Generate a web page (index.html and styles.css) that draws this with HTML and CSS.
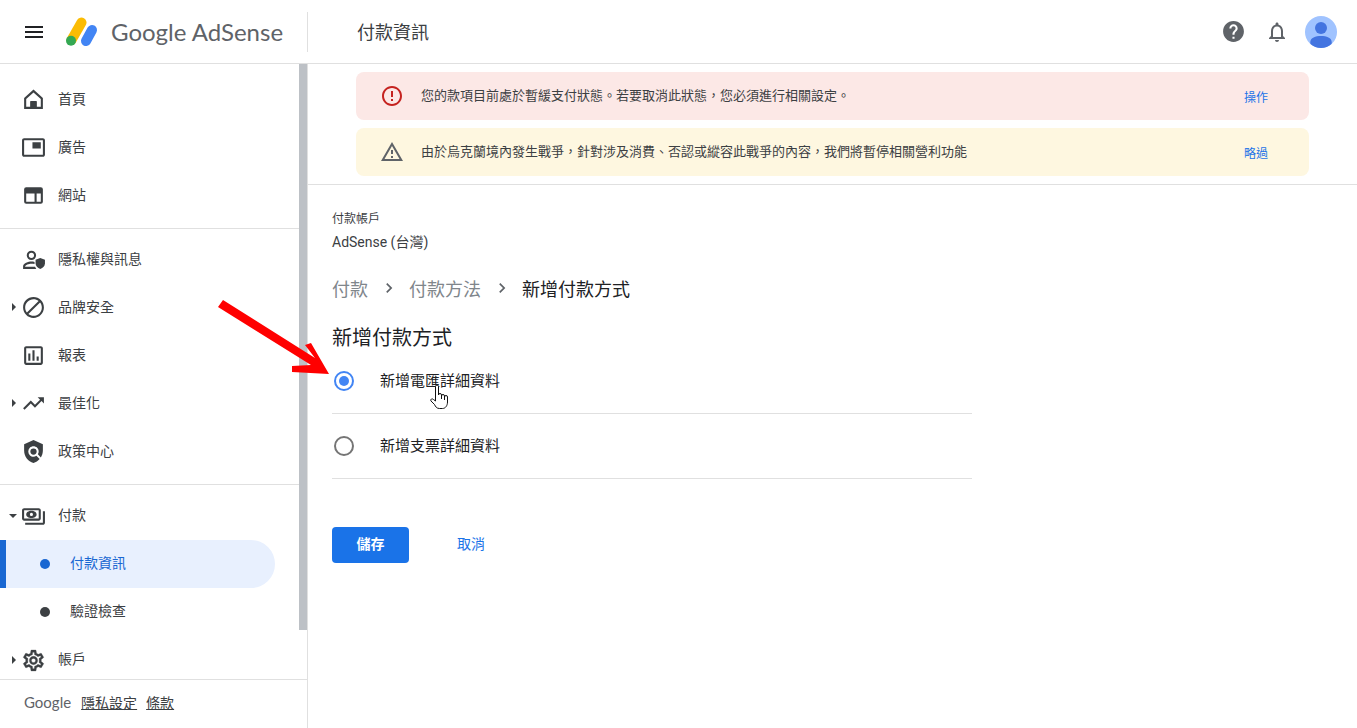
FILE: index.html
```html
<!DOCTYPE html>
<html lang="zh-Hant">
<head>
  <meta charset="UTF-8">
  <title>Google AdSense – 付款資訊</title>
  <meta name="viewport" content="width=device-width, initial-scale=1">
  <link rel="stylesheet" href="styles.css">
</head>
<body>

  <header class="topbar">
    <div class="brand">
      <svg class="menu-icon" viewBox="0 0 24 24"><path d="M3 18h18v-2H3v2zm0-5h18v-2H3v2zm0-5h18V6H3v2z"/></svg>
      <svg class="logo" viewBox="0 0 34 32">
        <path d="M16.5 6.5 L6.5 24" stroke="#fbbc04" stroke-width="10" stroke-linecap="round" fill="none"/>
        <path d="M27 14 L21 25" stroke="#4285f4" stroke-width="10" stroke-linecap="round" fill="none"/>
        <circle cx="6" cy="24.7" r="5" fill="#34a853"/>
      </svg>
      <span class="logo-text">Google AdSense</span>
    </div>
    <h1 class="page-title">付款資訊</h1>
    <div class="top-actions">
      <svg class="help-icon" viewBox="0 0 24 24"><path d="M12 2C6.48 2 2 6.48 2 12s4.48 10 10 10 10-4.48 10-10S17.52 2 12 2zm1 17h-2v-2h2v2zm2.07-7.75l-.9.92C13.45 12.9 13 13.5 13 15h-2v-.5c0-1.1.45-2.1 1.17-2.83l1.24-1.26c.37-.36.59-.86.59-1.41 0-1.1-.9-2-2-2s-2 .9-2 2H8c0-2.21 1.79-4 4-4s4 1.79 4 4c0 .88-.36 1.68-.93 2.25z"/></svg>
      <svg class="bell-icon" viewBox="0 0 24 24"><path d="M12 22c1.1 0 2-.9 2-2h-4c0 1.1.9 2 2 2zm6-6v-5c0-3.07-1.63-5.64-4.5-6.32V4c0-.83-.67-1.5-1.5-1.5s-1.5.67-1.5 1.5v.68C7.64 5.36 6 7.92 6 11v5l-2 2v1h16v-1l-2-2zm-2 1H8v-6c0-2.48 1.51-4.5 4-4.5s4 2.02 4 4.5v6z"/></svg>
      <svg class="avatar" viewBox="0 0 32 32">
        <circle cx="16" cy="16" r="16" fill="#a0c3ff"/>
        <circle cx="16" cy="12" r="6" fill="#4374e0"/>
        <path d="M5.5 28 C4 22 10 20 16 20 C22 20 28 22 26.5 28 A16 16 0 0 1 5.5 28z" fill="#4374e0"/>
      </svg>
    </div>
  </header>

  <div class="layout">
    <aside class="sidebar">
      <div class="nav-wrap">
        <nav class="nav">
          <div class="nav-group">
            <a class="nav-item" href="#">
              <svg class="nav-icon" viewBox="0 0 24 24"><path fill-rule="evenodd" d="M12 2.5 L3 10.5 V21 H21 V10.5z M12 5.2 L19 11.4 V19 H15 V13.5 H9 V19 H5 V11.4z"/><path d="M9 14h6v6H9z"/></svg>
              <span>首頁</span>
            </a>
            <a class="nav-item" href="#">
              <svg class="nav-icon" viewBox="0 0 24 24"><path d="M19 7h-8v6h8V7zm2-4H3c-1.1 0-2 .9-2 2v14c0 1.1.9 1.98 2 1.98h18c1.1 0 2-.88 2-1.98V5c0-1.1-.9-2-2-2zm0 16.01H3V4.98h18v14.03z"/></svg>
              <span>廣告</span>
            </a>
            <a class="nav-item" href="#">
              <svg class="nav-icon" viewBox="0 0 24 24"><path fill-rule="evenodd" d="M5 4h14a2 2 0 0 1 2 2v12a2 2 0 0 1-2 2H5a2 2 0 0 1-2-2V6a2 2 0 0 1 2-2zm0 6v8h8v-8zm10 0v8h4v-8z"/></svg>
              <span>網站</span>
            </a>
          </div>
          <div class="nav-group">
            <a class="nav-item" href="#">
              <svg class="nav-icon" viewBox="0 0 24 24"><path fill-rule="evenodd" d="M10 3.5a4.5 4.5 0 1 1 0 9 4.5 4.5 0 0 1 0-9zm0 2a2.5 2.5 0 1 0 0 5 2.5 2.5 0 0 0 0-5z"/><path d="M2 21v-2.5c0-2.8 5-4.5 8-4.5 1 0 2 .1 3 .4v2c-1-.3-2-.4-3-.4-2.5 0-6 1.3-6 2.5v.5h9.5c.3.7.7 1.400 1.200 2z"/><path d="M18.5 10.5l4.5 1.8v3.4c0 2.600-1.900 4.800-4.500 5.300-2.600-.5-4.500-2.700-4.500-5.300v-3.400z"/></svg>
              <span>隱私權與訊息</span>
            </a>
            <a class="nav-item" href="#">
              <i class="caret"></i>
              <svg class="nav-icon" viewBox="0 0 24 24"><path d="M12 2C6.48 2 2 6.48 2 12s4.48 10 10 10 10-4.48 10-10S17.52 2 12 2zM4 12c0-4.42 3.58-8 8-8 1.85 0 3.55.63 4.9 1.69L5.69 16.9C4.63 15.55 4 13.85 4 12zm8 8c-1.85 0-3.55-.63-4.9-1.69L18.31 7.1C19.37 8.45 20 10.15 20 12c0 4.42-3.58 8-8 8z"/></svg>
              <span>品牌安全</span>
            </a>
            <a class="nav-item" href="#">
              <svg class="nav-icon" viewBox="0 0 24 24"><path d="M19 3H5c-1.1 0-2 .9-2 2v14c0 1.1.9 2 2 2h14c1.1 0 2-.9 2-2V5c0-1.1-.9-2-2-2zm0 16H5V5h14v14zM7 10h2v7H7zm4-3h2v10h-2zm4 6h2v4h-2z"/></svg>
              <span>報表</span>
            </a>
            <a class="nav-item" href="#">
              <i class="caret"></i>
              <svg class="nav-icon" viewBox="0 0 24 24"><path d="M16 6l2.29 2.29-4.88 4.88-4-4L2 16.59 3.41 18l6-6 4 4 6.3-6.29L22 12V6z"/></svg>
              <span>最佳化</span>
            </a>
            <a class="nav-item" href="#">
              <svg class="nav-icon" viewBox="0 0 24 24"><path d="M21 5l-9-4-9 4v6c0 5.55 3.84 10.74 9 12 2.3-.56 4.33-1.9 5.88-3.71l-3.12-3.12c-1.94 1.29-4.58 1.07-6.29-.64-1.95-1.95-1.95-5.12 0-7.07 1.95-1.95 5.12-1.95 7.07 0 1.71 1.71 1.92 4.35.64 6.29l2.9 2.9C20.29 15.69 21 13.38 21 11V5z"/><circle cx="12" cy="12" r="3"/></svg>
              <span>政策中心</span>
            </a>
          </div>
          <div class="nav-group last">
            <a class="nav-item" href="#">
              <i class="caret open"></i>
              <svg class="nav-icon" viewBox="0 0 24 24"><path fill-rule="evenodd" d="M3 4h14c1.1 0 2 .9 2 2v8c0 1.1-.9 2-2 2H3c-1.1 0-2-.9-2-2V6c0-1.1.9-2 2-2zm0 2v8h14V6z"/><path fill-rule="evenodd" d="M10 6.5c-2.8 0-5 1.6-5 3.5s2.2 3.5 5 3.5 5-1.6 5-3.5-2.2-3.5-5-3.5zm0 2a1.5 1.5 0 1 1 0 3 1.5 1.5 0 0 1 0-3z"/><path d="M23 7v11c0 1.1-.9 2-2 2H4v-2h17V7z"/></svg>
              <span>付款</span>
            </a>
            <a class="nav-item sub active" href="#"><i class="bullet"></i><span>付款資訊</span></a>
            <a class="nav-item sub" href="#"><i class="bullet"></i><span>驗證檢查</span></a>
            <a class="nav-item" href="#">
              <i class="caret"></i>
              <svg class="nav-icon gear" viewBox="0 0 24 24"><path d="M19.43 12.98c.04-.32.07-.64.07-.98 0-.34-.03-.66-.07-.98l2.11-1.65c.19-.15.24-.42.12-.64l-2-3.46c-.09-.16-.26-.25-.44-.25-.06 0-.12.01-.17.03l-2.49 1c-.52-.4-1.08-.73-1.69-.98l-.38-2.65C14.46 2.18 14.25 2 14 2h-4c-.25 0-.46.18-.49.42l-.38 2.65c-.61.25-1.17.59-1.69.98l-2.49-1c-.06-.02-.12-.03-.18-.03-.17 0-.34.09-.43.25l-2 3.46c-.13.22-.07.49.12.64l2.11 1.65c-.04.32-.07.65-.07.98 0 .33.03.66.07.98l-2.11 1.65c-.19.15-.24.42-.12.64l2 3.46c.09.16.26.25.44.25.06 0 .12-.01.17-.03l2.49-1c.52.4 1.08.73 1.69.98l.38 2.65c.03.24.24.42.49.42h4c.25 0 .46-.18.49-.42l.38-2.65c.61-.25 1.17-.59 1.69-.98l2.49 1c.06.02.12.03.18.03.17 0 .34-.09.43-.25l2-3.46c.12-.22.07-.49-.12-.64l-2.11-1.65zm-1.98-1.71c.04.31.05.52.05.73 0 .21-.02.43-.05.73l-.14 1.13.89.7 1.08.84-.7 1.21-1.27-.51-1.04-.42-.9.68c-.43.32-.84.56-1.25.73l-1.06.43-.16 1.13-.2 1.35h-1.4l-.19-1.35-.16-1.13-1.06-.43c-.43-.18-.83-.41-1.23-.71l-.91-.7-1.06.43-1.27.51-.7-1.21 1.08-.84.89-.7-.14-1.13c-.03-.31-.05-.54-.05-.74s.02-.43.05-.73l.14-1.13-.89-.7-1.08-.84.7-1.21 1.27.51 1.04.42.9-.68c.43-.32.84-.56 1.25-.73l1.06-.43.16-1.13.2-1.35h1.39l.19 1.35.16 1.13 1.06.43c.43.18.83.41 1.23.71l.91.7 1.06-.43 1.27-.51.7 1.21-1.07.85-.89.7.14 1.13zM12 8c-2.21 0-4 1.79-4 4s1.79 4 4 4 4-1.79 4-4-1.79-4-4-4zm0 6c-1.1 0-2-.9-2-2s.9-2 2-2 2 .9 2 2-.9 2-2 2z"/></svg>
              <span>帳戶</span>
            </a>
          </div>
        </nav>
        <div class="scrollbar"><div class="thumb"></div></div>
      </div>
      <footer class="side-footer">
        <span class="footer-google">Google</span>
        <a href="#">隱私設定</a>
        <a href="#">條款</a>
      </footer>
    </aside>

    <main class="main">
      <div class="alerts">
        <div class="alert error">
          <svg class="alert-icon" viewBox="0 0 24 24"><path d="M11 15h2v2h-2zm0-8h2v6h-2zm.99-5C6.47 2 2 6.48 2 12s4.47 10 9.99 10C17.52 22 22 17.52 22 12S17.52 2 11.99 2zM12 20c-4.42 0-8-3.58-8-8s3.58-8 8-8 8 3.58 8 8-3.58 8-8 8z"/></svg>
          <p>您的款項目前處於暫緩支付狀態。若要取消此狀態&#xFF0C;您必須進行相關設定。</p>
          <a href="#">操作</a>
        </div>
        <div class="alert warning">
          <svg class="alert-icon" viewBox="0 0 24 24"><path d="M12 5.99L19.53 19H4.47L12 5.99M12 2L1 21h22L12 2zm1 14h-2v2h2v-2zm0-6h-2v4h2v-4z"/></svg>
          <p>由於烏克蘭境內發生戰爭&#xFF0C;針對涉及消費、否認或縱容此戰爭的內容&#xFF0C;我們將暫停相關營利功能</p>
          <a href="#">略過</a>
        </div>
      </div>

      <section class="content">
        <div class="account-label">付款帳戶</div>
        <div class="account-name">AdSense (台灣)</div>

        <div class="breadcrumb">
          <a href="#">付款</a>
          <svg viewBox="0 0 24 24"><path d="M8.59 16.59L13.17 12 8.59 7.41 10 6l6 6-6 6z"/></svg>
          <a href="#">付款方法</a>
          <svg viewBox="0 0 24 24"><path d="M8.59 16.59L13.17 12 8.59 7.41 10 6l6 6-6 6z"/></svg>
          <span>新增付款方式</span>
        </div>

        <h2 class="form-title">新增付款方式</h2>

        <div class="option">
          <span class="radio checked"></span>
          <span>新增電匯詳細資料</span>
        </div>
        <div class="option">
          <span class="radio"></span>
          <span>新增支票詳細資料</span>
        </div>

        <div class="form-actions">
          <button class="btn-save">儲存</button>
          <a class="btn-cancel" href="#">取消</a>
        </div>
      </section>
    </main>
  </div>

  <!-- annotation drawn over the screenshot -->
  <svg class="red-arrow" viewBox="0 0 120 90">
    <path d="M4 1 L96 59 L86 46 L92 44 L110 75 L73 73 L73 67 L92 66 L-1 8z" fill="#ff0000"/>
  </svg>
  <svg class="hand-cursor" viewBox="0 0 20 26">
    <path d="M5.5 2.5a1.5 1.5 0 0 1 3 0V11a1.5 1.5 0 0 1 3 0v1a1.5 1.5 0 0 1 3 0v1a1.5 1.5 0 0 1 3 0v5c0 3.5-2 6.5-5 6.5h-3c-3 0-4-2-5-4L1 17c-1-1.5 1-3 2.5-1.5l2 1.5z" fill="#fff" stroke="#111" stroke-width="1"/>
    <path d="M11.5 12v3M14.5 13v3" stroke="#111" stroke-width="1" fill="none"/>
  </svg>

</body>
</html>
```

FILE: styles.css
```css
* {
  box-sizing: border-box;
}

html, body {
  height: 100%;
}

body {
  margin: 0;
  position: relative;
  overflow: hidden;
  background: #fff;
  color: #3c4043;
  font-family: Roboto, "Noto Sans CJK TC", sans-serif;
  font-size: 14px;
}

a {
  color: inherit;
  text-decoration: none;
}

/* ===== TOP BAR ==== */
.topbar {
  display: flex;
  align-items: center;
  height: 64px;
  border-bottom: 1px solid #e0e0e0;
}

.brand {
  display: flex;
  align-items: center;
  width: 308px;
  height: 40px;
  padding-left: 22px;
  border-right: 1px solid #e0e0e0;
}

.menu-icon {
  width: 24px;
  height: 24px;
  fill: #202124;
}

.logo {
  width: 34px;
  height: 32px;
  margin-left: 19px;
}

.logo-text {
  margin-left: 12px;
  font-family: Lato, sans-serif;
  font-size: 24px;
  color: #5f6368;
  white-space: nowrap;
}

.page-title {
  margin: 0 0 2px 49px;
  font-size: 18px;
  font-weight: 400;
  color: #3c4043;
}

.top-actions {
  display: flex;
  align-items: center;
  margin-left: auto;
  padding-right: 20px;
}

.help-icon {
  width: 25px;
  height: 25px;
  fill: #5f6368;
}

.bell-icon {
  width: 24px;
  height: 24px;
  margin-left: 19px;
  fill: #5f6368;
}

.avatar {
  width: 32px;
  height: 32px;
  margin-left: 16px;
}

/* ===== SIDEBAR ==== */
.layout {
  display: flex;
  height: 664px;
}

.sidebar {
  display: flex;
  flex-direction: column;
  flex: none;
  width: 308px;
  border-right: 1px solid #e0e0e0;
}

.nav-wrap {
  display: flex;
  flex: 1;
  min-height: 0;
}

.nav {
  flex: 1;
  min-width: 0;
  overflow: hidden;
}

.nav-group {
  padding: 11px 0 9px;
  border-bottom: 1px solid #e0e0e0;
}

.nav-group + .nav-group {
  padding-top: 6px;
}

.nav-group.last {
  padding-top: 7px;
  border-bottom: none;
}

.nav-item {
  display: flex;
  align-items: center;
  position: relative;
  height: 48px;
  padding-left: 21px;
  color: #3c4043;
  font-size: 14px;
}

.nav-item span {
  margin-bottom: 2px;
}

.nav-group.last .nav-item span {
  margin-bottom: 4px;
}

.nav-icon {
  flex: none;
  width: 25px;
  height: 25px;
  margin-right: 12px;
  fill: #3c4043;
}

.nav-icon.gear {
  stroke: #3c4043;
  stroke-width: 0.3;
}

.caret {
  position: absolute;
  left: 12px;
  top: 20px;
  border-left: 4px solid #3c4043;
  border-top: 4px solid transparent;
  border-bottom: 4px solid transparent;
}

.caret.open {
  left: 9px;
  top: 22px;
  border-top: 4px solid #3c4043;
  border-left: 4px solid transparent;
  border-right: 4px solid transparent;
  border-bottom: none;
}

.nav-item.sub {
  padding-left: 40px;
}

.bullet {
  flex: none;
  width: 10px;
  height: 10px;
  margin-right: 20px;
  border-radius: 50%;
  background: #3c4043;
}

.nav-item.active {
  width: 275px;
  border-left: 6px solid #1967d2;
  padding-left: 34px;
  background: #e8f0fe;
  border-radius: 0 24px 24px 0;
  color: #1967d2;
}

.nav-item.active .bullet {
  background: #1967d2;
}

.scrollbar {
  flex: none;
  width: 8px;
}

.thumb {
  height: 566px;
  background: #bdc1c6;
}

.side-footer {
  display: flex;
  align-items: center;
  flex: none;
  height: 49px;
  padding: 0 0 4px 24px;
  border-top: 1px solid #e0e0e0;
}

.footer-google {
  margin-right: 10px;
  font-family: Lato, sans-serif;
  font-size: 15px;
  color: #5f6368;
}

.side-footer a {
  margin-right: 9px;
  color: #3c4043;
  text-decoration: underline;
}

/* ===== MAIN ==== */
.main {
  flex: 1;
  min-width: 0;
}

.alerts {
  display: flex;
  flex-direction: column;
  gap: 8px;
  padding: 8px 48px;
  border-bottom: 1px solid #e0e0e0;
}

.alert {
  display: flex;
  align-items: center;
  height: 48px;
  padding: 0 41px 0 24px;
  border-radius: 8px;
}

.alert.error {
  background: #fce8e6;
}

.alert.warning {
  background: #fef7e0;
}

.alert-icon {
  flex: none;
  width: 24px;
  height: 24px;
  margin-right: 17px;
}

.error .alert-icon {
  fill: #c5221f;
}

.warning .alert-icon {
  fill: #5f6368;
}

.alert p {
  flex: 1;
  margin: 0 0 4px;
  font-size: 13px;
  color: #3c4043;
}

.alert a {
  margin-top: 1px;
  font-size: 12px;
  color: #1a73e8;
}

.content {
  padding: 26px 24px 0;
}

.account-label {
  font-size: 12px;
  line-height: 16px;
  color: #3c4043;
}

.account-name {
  margin-top: 5px;
  line-height: 20px;
  color: #3c4043;
}

.breadcrumb {
  display: flex;
  align-items: center;
  height: 24px;
  margin-top: 24px;
  font-size: 18px;
  color: #202124;
}

.breadcrumb a {
  color: #80868b;
}

.breadcrumb svg {
  width: 20px;
  height: 20px;
  margin: 0 10.5px;
  fill: #5f6368;
}

.form-title {
  margin: 27px 0 0;
  font-size: 20px;
  font-weight: 400;
  line-height: 22px;
  color: #202124;
}

.option {
  display: flex;
  align-items: center;
  width: 640px;
  height: 65px;
  padding-bottom: 1px;
  border-bottom: 1px solid #e0e0e0;
  color: #202124;
  font-size: 15px;
}

.option span:last-child {
  margin-bottom: 2px;
}

.radio {
  flex: none;
  width: 20px;
  height: 20px;
  margin: 0 26px 0 2px;
  border: 2px solid #757575;
  border-radius: 50%;
}

.radio.checked {
  display: flex;
  align-items: center;
  justify-content: center;
  border-color: #4285f4;
}

.radio.checked::after {
  content: "";
  width: 10px;
  height: 10px;
  border-radius: 50%;
  background: #4285f4;
}

.form-actions {
  display: flex;
  align-items: center;
  margin-top: 48px;
}

.btn-save {
  width: 77px;
  height: 36px;
  padding: 0 0 4px;
  border: none;
  border-radius: 4px;
  background: #1a73e8;
  color: #fff;
  font-family: inherit;
  font-size: 14px;
  font-weight: 700;
}

.btn-cancel {
  margin: 0 0 4px 48px;
  color: #1a73e8;
}

/* ===== ANNOTATION ==== */
.red-arrow {
  position: absolute;
  left: 219px;
  top: 299px;
  width: 120px;
  height: 90px;
  overflow: visible;
}

.hand-cursor {
  position: absolute;
  left: 430px;
  top: 384px;
  width: 20px;
  height: 26px;
}
```
